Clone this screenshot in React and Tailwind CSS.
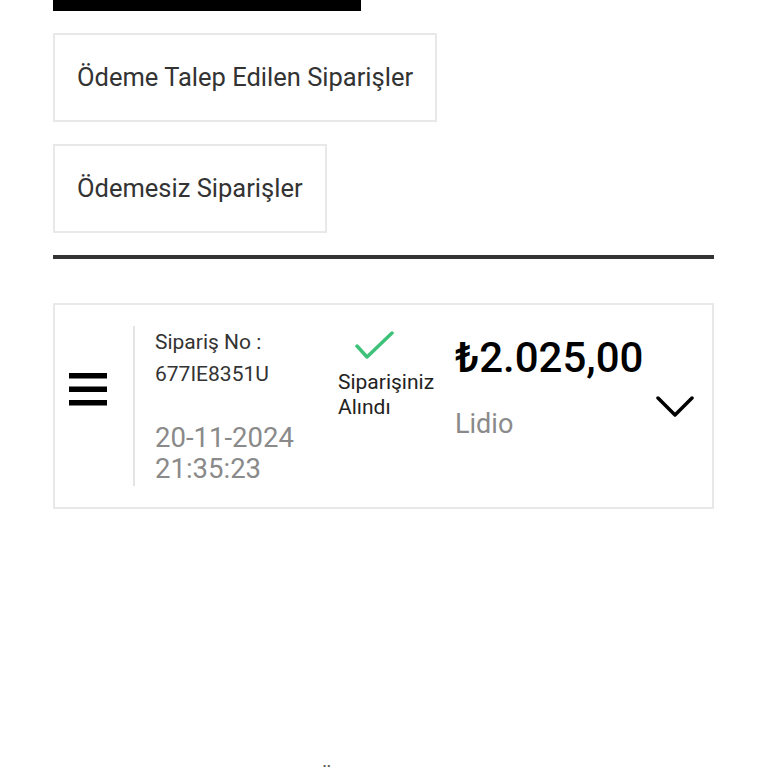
import React from 'react';

const font = { fontFamily: 'Roboto, "Noto Sans", sans-serif' };

function Hamburger() {
  return (
    <svg width="38" height="33" viewBox="0 0 38 33" className="block">
      <rect x="0" y="0" width="38" height="5.5" fill="#000" />
      <rect x="0" y="13.5" width="38" height="5.5" fill="#000" />
      <rect x="0" y="27" width="38" height="5.5" fill="#000" />
    </svg>
  );
}

function Check() {
  return (
    <svg width="40" height="30" viewBox="0 0 40 30" className="block">
      <polyline points="2,15 12,26 37,2" fill="none" stroke="#3ec27a" strokeWidth="3.5" strokeLinecap="round" strokeLinejoin="round" />
    </svg>
  );
}

function Chevron() {
  return (
    <svg width="38" height="24" viewBox="0 0 38 24" className="block">
      <polyline points="2,3 19,20 36,3" fill="none" stroke="#000" strokeWidth="3.5" strokeLinecap="round" strokeLinejoin="round" />
    </svg>
  );
}

const tabs = ['Ödeme Talep Edilen Siparişler', 'Ödemesiz Siparişler'];

export default function App() {
  return (
    <div className="bg-white h-[768px] overflow-hidden" style={font}>
      <div className="ml-[53px] w-[661px]">
        <div className="h-[11px] w-[308px] bg-black" />

        {tabs.map((t) => (
          <div key={t} className="mt-[22px] flex">
            <div className="h-[89px] border-2 border-[#e8e8e8] pl-[22px] pr-[22px] flex items-center text-[25.5px] text-[#333]">
              {t}
            </div>
          </div>
        ))}

        <div className="mt-[22px] h-[4px] bg-[#333]" />

        <div className="mt-[44px] h-[206px] border-2 border-[#e8e8e8] flex">
          <div className="pl-[14px] pt-[68px] w-[78px]">
            <Hamburger />
          </div>
          <div className="w-[2px] bg-[#e4e4e4] my-[21px]" />

          <div className="w-[203px] pl-[20px] pt-[21px]">
            <div className="text-[21px] leading-[32px] text-[#333]">Sipariş No :</div>
            <div className="text-[21px] leading-[32px] text-[#333]">677IE8351U</div>
            <div className="mt-[32px] text-[27.5px] leading-[31px] text-[#8a8a8a]">20-11-2024</div>
            <div className="text-[27.5px] leading-[31px] text-[#8a8a8a]">21:35:23</div>
          </div>

          <div className="w-[117px] pt-[26px]">
            <div className="pl-[17px]">
              <Check />
            </div>
            <div className="mt-[9px] text-[21px] leading-[25px] text-[#222]">
              Siparişiniz
              <br />
              Alındı
            </div>
          </div>

          <div className="flex-1 pt-[29px]">
            <div className="text-[42px] leading-[48px] font-medium text-black">₺2.025,00</div>
            <div className="mt-[26px] text-[27px] leading-[32px] text-[#8a8a8a]">Lidio</div>
          </div>

          <div className="flex items-center pr-[18px] pt-[2px]">
            <Chevron />
          </div>
        </div>

        <div className="mt-[255px] pl-[222px] text-[20px] leading-[24px] text-[#555]">SON ÖDEMELER</div>
      </div>
    </div>
  );
}
